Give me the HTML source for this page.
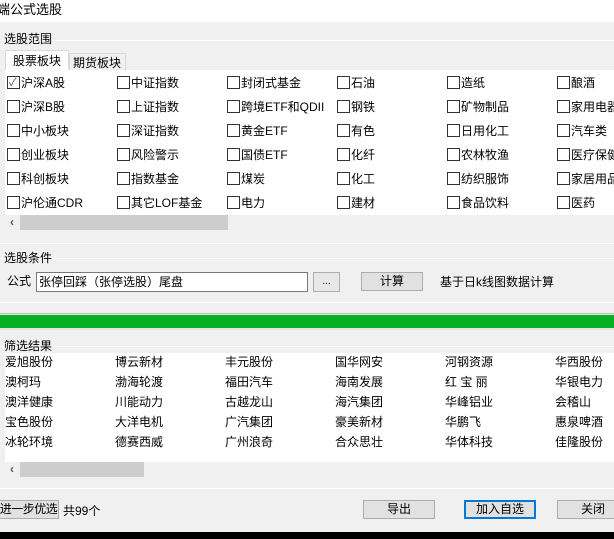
<!DOCTYPE html><html><head><meta charset="utf-8"><style>
*{margin:0;padding:0;box-sizing:border-box}
body{width:614px;height:539px;overflow:hidden;background:#f0f0f0;position:relative;font-family:"Liberation Sans","Noto Sans CJK SC","WenQuanYi Zen Hei",sans-serif;font-size:12px;color:#000}
.a{position:absolute;white-space:nowrap;line-height:14px}
.cb{position:absolute;width:13px;height:13px;border:1px solid #333;background:#fff}
.hl{position:absolute;height:1px;background:#d8d8d8;border-bottom:1px solid #fff}
.btn{position:absolute;border:1px solid #adadad;background:#e1e1e1;text-align:center;line-height:17px;white-space:nowrap;overflow:hidden}
</style></head><body>
<div style="position:absolute;left:0;top:0;width:614px;height:22px;background:#fff"></div>
<div class="a" style="left:-3px;top:3px;font-size:13px">端公式选股</div>

<div class="hl" style="left:0;top:40px;width:614px"></div>
<div class="a" style="left:4px;top:32px;background:#f0f0f0;padding-right:2px">选股范围</div>
<div style="position:absolute;left:5px;top:50px;width:64px;height:21px;background:#fff;border:1px solid #d9d9d9;border-bottom:none"></div>
<div class="a" style="left:13px;top:54px">股票板块</div>
<div style="position:absolute;left:69px;top:53px;width:57px;height:18px;background:#f0f0f0;border:1px solid #d9d9d9;border-bottom:none"></div>
<div class="a" style="left:73px;top:56px">期货板块</div>
<div style="position:absolute;left:5px;top:70px;width:609px;height:145px;background:#fff"></div>
<div id="cbs"></div>
<div class="a" style="left:10px;top:215px;font-size:12px;color:#555;font-weight:bold">‹</div>
<div style="position:absolute;left:20px;top:215px;width:208px;height:15px;background:#cdcdcd"></div>
<div class="hl" style="left:0;top:243px;width:614px"></div>

<div class="hl" style="left:0;top:258px;width:614px"></div>
<div class="a" style="left:4px;top:251px;background:#f0f0f0;padding-right:2px">选股条件</div>
<div class="a" style="left:7px;top:274px">公式</div>
<div style="position:absolute;left:36px;top:272px;width:272px;height:20px;background:#fff;border:1px solid #7a7a7a"></div>
<div class="a" style="left:39px;top:275px">张停回踩（张停选股）尾盘</div>
<div class="btn" style="left:313px;top:272px;width:27px;height:20px;background:#e8e8e8;font-size:10px">...</div>
<div class="btn" style="left:361px;top:272px;width:62px;height:19px">计算</div>
<div class="a" style="left:440px;top:275px">基于日k线图数据计算</div>
<div class="hl" style="left:0;top:302px;width:614px"></div>
<div style="position:absolute;left:0;top:313px;width:614px;height:17px;background:#e6e6e6;border-top:1px solid #bcbcbc"></div>
<div style="position:absolute;left:0;top:315px;width:614px;height:13px;background:#06b025"></div>

<div class="hl" style="left:0;top:346px;width:614px"></div>
<div class="a" style="left:4px;top:339px;background:#f0f0f0;padding-right:2px">筛选结果</div>
<div style="position:absolute;left:5px;top:353px;width:609px;height:109px;background:#fff"></div>
<div id="res"></div>
<div class="a" style="left:10px;top:462px;font-size:12px;color:#555;font-weight:bold">‹</div>
<div style="position:absolute;left:20px;top:462px;width:124px;height:15px;background:#cdcdcd"></div>
<div class="hl" style="left:0;top:488px;width:614px"></div>

<div class="btn" style="left:-2px;top:500px;width:61px;height:19px;letter-spacing:-0.5px">进一步优选</div>
<div class="a" style="left:63px;top:504px">共99个</div>
<div class="btn" style="left:363px;top:500px;width:72px;height:19px">导出</div>
<div class="btn" style="left:464px;top:500px;width:72px;height:19px;border:2px solid #0078d7;line-height:15px">加入自选</div>
<div class="btn" style="left:557px;top:500px;width:72px;height:19px">关闭</div>
<div style="position:absolute;left:0;top:532px;width:614px;height:7px;background:#000"></div>

<script>
var cols=[["沪深A股","沪深B股","中小板块","创业板块","科创板块","沪伦通CDR"],["中证指数","上证指数","深证指数","风险警示","指数基金","其它LOF基金"],["封闭式基金","跨境ETF和QDII","黄金ETF","国债ETF","煤炭","电力"],["石油","钢铁","有色","化纤","化工","建材"],["造纸","矿物制品","日用化工","农林牧渔","纺织服饰","食品饮料"],["酿酒","家用电器","汽车类","医疗保健","家居用品","医药"]];
var h="";
for(var c=0;c<6;c++)for(var r=0;r<6;r++){var x=7+c*110,y=76+r*24;h+='<div class="cb" style="left:'+x+'px;top:'+y+'px">'+(c==0&&r==0?'<span style="position:absolute;left:1px;top:-3px;font-size:11px;color:#555">✓</span>':'')+'</div><div class="a" style="left:'+(x+14)+'px;top:'+(y)+'px">'+cols[c][r]+'</div>';}
document.getElementById("cbs").innerHTML=h;
var res=[["爱旭股份","博云新材","丰元股份","国华网安","河钢资源","华西股份"],["澳柯玛","渤海轮渡","福田汽车","海南发展","红 宝 丽","华银电力"],["澳洋健康","川能动力","古越龙山","海汽集团","华峰铝业","会稽山"],["宝色股份","大洋电机","广汽集团","豪美新材","华鹏飞","惠泉啤酒"],["冰轮环境","德赛西威","广州浪奇","合众思壮","华体科技","佳隆股份"]];
h="";
for(var r=0;r<5;r++)for(var c=0;c<6;c++){h+='<div class="a" style="left:'+(5+c*110)+'px;top:'+(355+r*20)+'px">'+res[r][c]+'</div>';}
document.getElementById("res").innerHTML=h;
</script>
</body></html>
